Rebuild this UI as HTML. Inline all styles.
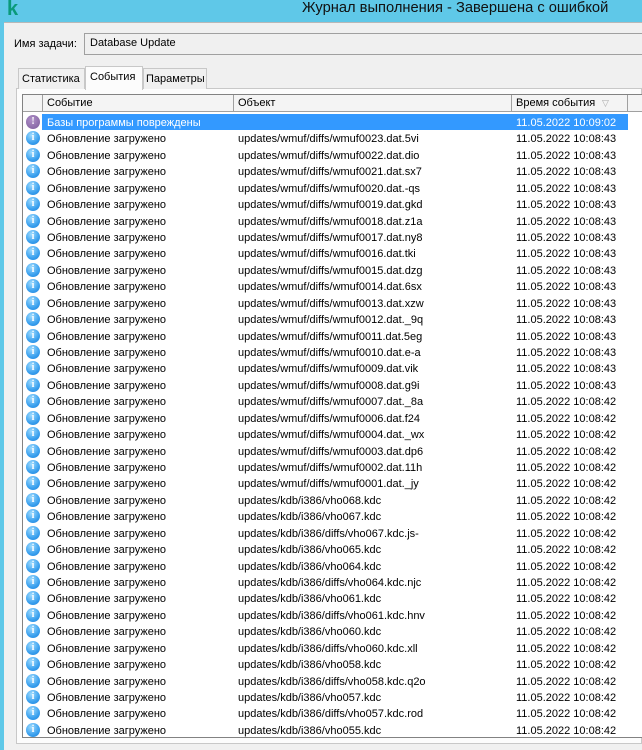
<!DOCTYPE html>
<html><head><meta charset="utf-8"><style>
*{margin:0;padding:0;box-sizing:border-box}
body{width:642px;height:750px;overflow:hidden;background:#5fc8e8;font-family:"Liberation Sans","DejaVu Sans",sans-serif;font-size:11px;color:#000;position:relative}
.abs{position:absolute}
#title{left:0;top:0;width:642px;height:22px;background:#5fc8e8}
#body{left:4px;top:22px;width:638px;height:728px;background:#f0f0f0}
.row{position:absolute;left:0;width:620px;height:16.43px;line-height:16px;white-space:nowrap}
.row span{position:absolute;top:1px}
.ic{position:absolute;left:3px;top:1px;width:14px;height:14px;border-radius:50%;background:radial-gradient(circle at 40% 30%,#9fdcff,#3aa0ee 60%,#1e80d8);color:#fff;font:bold 10px/14px "Liberation Serif",serif;text-align:center}
.err{background:radial-gradient(circle at 40% 35%,#b090c8,#7a5a9a)}
.hd{position:absolute;top:0;height:17px;border-right:1px solid #a0a0a0;border-bottom:1px solid #a0a0a0;background:#f4f4f4;line-height:17px;padding-left:4px}
</style></head><body>
<div id="title" class="abs"></div>
<div class="abs" style="left:7px;top:-2px;font:bold 20px 'Liberation Sans',sans-serif;color:#0a9a7a">k</div>
<div class="abs" style="left:302px;top:0px;font-size:14.7px;color:#111">Журнал выполнения - Завершена с ошибкой</div>
<div id="body" class="abs"></div>
<div class="abs" style="left:4px;top:22px;width:638px;height:1px;background:#b8b8b8"></div>
<div class="abs" style="left:14px;top:38px">Имя задачи:</div>
<div class="abs" style="left:84px;top:33px;width:560px;height:22px;border:1px solid #a0a0a0;border-right:none;background:#f0f0f0;padding:3px 5px">Database Update</div>
<div class="abs" style="left:16px;top:88px;width:626px;height:656px;border:1px solid #c8c8c8;background:#fcfcfc"></div>
<div class="abs" style="left:18px;top:68px;width:67px;height:21px;border:1px solid #c8c8c8;border-bottom:none;background:#f0f0f0;padding:4px 3px">Статистика</div>
<div class="abs" style="left:143px;top:68px;width:64px;height:21px;border:1px solid #c8c8c8;border-bottom:none;background:#f0f0f0;padding:4px 2px">Параметры</div>
<div class="abs" style="left:85px;top:66px;width:58px;height:24px;border:1px solid #c8c8c8;border-bottom:none;background:#fcfcfc;padding:4px 4px">События</div>
<div class="abs" style="left:22px;top:94px;width:620px;height:644px;border:1px solid #828282;border-right:none;background:#fff;overflow:hidden" id="list">
<div class="hd" style="left:0;width:20px"></div>
<div class="hd" style="left:20px;width:191px">Событие</div>
<div class="hd" style="left:211px;width:278px">Объект</div>
<div class="hd" style="left:489px;width:116px">Время события<span style="position:absolute;left:90px;color:#aaa;font-size:9px">▽</span></div>
<div class="hd" style="left:605px;width:20px"></div>
<div id="rows"></div>
</div>
<script>
var r=[["Базы программы повреждены","","11.05.2022 10:09:02",1]];
var w=["0023.dat.5vi","0022.dat.dio","0021.dat.sx7","0020.dat.-qs","0019.dat.gkd","0018.dat.z1a","0017.dat.ny8","0016.dat.tki","0015.dat.dzg","0014.dat.6sx","0013.dat.xzw","0012.dat._9q","0011.dat.5eg","0010.dat.e-a","0009.dat.vik","0008.dat.g9i","0007.dat._8a","0006.dat.f24","0004.dat._wx","0003.dat.dp6","0002.dat.11h","0001.dat._jy"];
w.forEach(function(x,i){r.push(["Обновление загружено","updates/wmuf/diffs/wmuf"+x,"11.05.2022 10:08:4"+(i<16?"3":"2")])});
["vho068.kdc","vho067.kdc","diffs/vho067.kdc.js-","vho065.kdc","vho064.kdc","diffs/vho064.kdc.njc","vho061.kdc","diffs/vho061.kdc.hnv","vho060.kdc","diffs/vho060.kdc.xll","vho058.kdc","diffs/vho058.kdc.q2o","vho057.kdc","diffs/vho057.kdc.rod","vho055.kdc"].forEach(function(x){r.push(["Обновление загружено","updates/kdb/i386/"+x,"11.05.2022 10:08:42"])});
var h="";r.forEach(function(a,i){var t=19+i*16.43;
h+='<div class="row" style="top:'+t+'px">'+(a[3]?'<div style="position:absolute;left:19px;top:0;width:586px;height:16px;background:#3399ff"></div>':'')+'<div class="ic'+(a[3]?' err':'')+'">'+(a[3]?'!':'i')+'</div><span style="left:24px;'+(a[3]?'color:#fff':'')+'">'+a[0]+'</span><span style="left:215px">'+a[1]+'</span><span style="left:493px;'+(a[3]?'color:#fff':'')+'">'+a[2]+'</span></div>'});
document.getElementById("rows").innerHTML=h;
</script>
</body></html>
